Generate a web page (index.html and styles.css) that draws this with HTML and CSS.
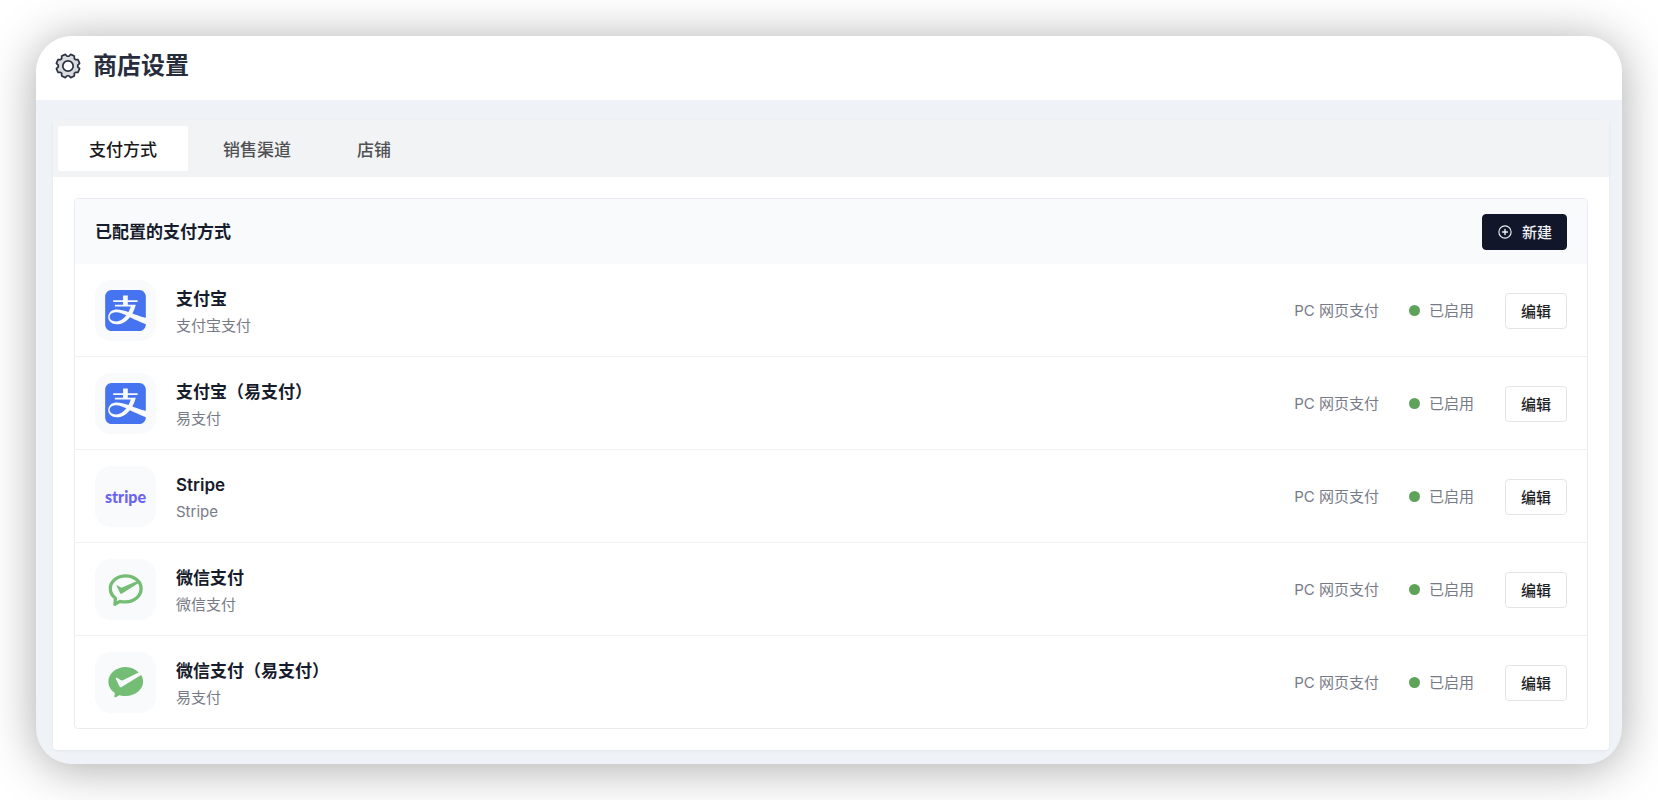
FILE: index.html
```html
<!DOCTYPE html>
<html lang="zh-CN">
<head>
  <meta charset="UTF-8" />
  <title>商店设置</title>
  <link rel="stylesheet" href="styles.css">
</head>
<body>
  <svg class="symbols" aria-hidden="true">
    <symbol id="alipay" viewBox="0 0 24 24">
      <path fill="#4674f0" d="M19.695 15.07c3.426 1.158 4.203 1.22 4.203 1.22V3.846c0-2.124-1.705-3.845-3.81-3.845H3.914C1.808.001.102 1.722.102 3.846v16.31c0 2.123 1.706 3.845 3.813 3.845h16.173c2.105 0 3.81-1.722 3.81-3.845v-.157s-6.19-2.602-9.315-4.119c-2.096 2.602-4.8 4.181-7.607 4.181-4.75 0-6.361-4.19-4.112-6.949.49-.602 1.324-1.175 2.617-1.497 2.025-.502 5.247.313 8.266 1.317a16.796 16.796 0 0 0 1.341-3.302H5.781v-.952h4.799V6.975H4.77v-.953h5.81V3.591s0-.409.411-.409h2.347v2.84h5.744v.951h-5.744v1.704h4.69a19.453 19.453 0 0 1-1.986 5.06c1.424.52 2.702 1.011 3.654 1.333m-13.81-2.032c-.596.06-1.71.325-2.321.869-1.83 1.608-.735 4.55 2.968 4.55 2.151 0 4.301-1.388 5.99-3.61-2.403-1.182-4.438-2.028-6.637-1.809" />
    </symbol>
  </svg>

  <div class="window">
    <header class="page-header">
      <svg class="gear" viewBox="0 0 24 24" fill="#d9dbdf" stroke="#2b3242" stroke-width="1.6" stroke-linejoin="round" aria-hidden="true">
        <path d="M12.8 3 14.5 1.3 17.8 2.7V5.1L18.9 6.2H21.3L22.7 9.5 21 11.2V12.8L22.7 14.5 21.3 17.8H18.9L17.8 18.9V21.3L14.5 22.7 12.8 21H11.2L9.5 22.7 6.2 21.3V18.9L5.1 17.8H2.7L1.3 14.5 3 12.8V11.2L1.3 9.5 2.7 6.2H5.1L6.2 5.1V2.7L9.5 1.3 11.2 3Z" />
        <circle cx="12" cy="12" r="4.8" fill="#fff" />
      </svg>
      <h1>商店设置</h1>
    </header>

    <main class="card">
      <div class="tabs" role="tablist">
        <button class="tab active" type="button" role="tab" aria-selected="true">支付方式</button>
        <button class="tab" type="button" role="tab" aria-selected="false">销售渠道</button>
        <button class="tab" type="button" role="tab" aria-selected="false">店铺</button>
      </div>

      <section class="panel">
        <div class="panel-header">
          <h2>已配置的支付方式</h2>
          <button class="btn btn-primary" type="button">
            <svg class="plus" viewBox="0 0 16 16" fill="none" stroke="currentColor" stroke-width="1.3" stroke-linecap="round" aria-hidden="true">
              <circle cx="8" cy="8" r="7" />
              <path d="M8 5.2v5.6M5.2 8h5.6" stroke-width="1.6" />
            </svg>
            新建
          </button>
        </div>

        <ul class="methods">
          <li class="method">
            <div class="logo"><svg aria-hidden="true"><use href="#alipay" /></svg></div>
            <div class="info">
              <h3>支付宝</h3>
              <p>支付宝支付</p>
            </div>
            <span class="platform">PC 网页支付</span>
            <span class="status">已启用</span>
            <button class="btn" type="button">编辑</button>
          </li>
          <li class="method">
            <div class="logo"><svg aria-hidden="true"><use href="#alipay" /></svg></div>
            <div class="info">
              <h3>支付宝（易支付）</h3>
              <p>易支付</p>
            </div>
            <span class="platform">PC 网页支付</span>
            <span class="status">已启用</span>
            <button class="btn" type="button">编辑</button>
          </li>
          <li class="method">
            <div class="logo"><span class="stripe">stripe</span></div>
            <div class="info">
              <h3>Stripe</h3>
              <p>Stripe</p>
            </div>
            <span class="platform">PC 网页支付</span>
            <span class="status">已启用</span>
            <button class="btn" type="button">编辑</button>
          </li>
          <li class="method">
            <div class="logo">
              <svg viewBox="0 0 41 41" aria-hidden="true">
                <path d="M20.7 6.8C12.2 6.8 5.3 12.4 5.3 19.6c0 4 2 7.300 5.100 9.700L9.900 35.300l4.900-3c1.800.4 3.600.6 5.900.6 8.500 0 15.400-5.900 15.400-13.100S29.200 6.800 20.700 6.800Z" fill="none" stroke="#74bd74" stroke-width="3.3" stroke-linejoin="round" />
                <path d="M11.300 16.300c1.700.1 3.400 1.400 5.200 2.500L34.500 11l.8 2L17 24.600c-.8.400-1.500.1-1.900-.7Z" fill="#74bd74" />
              </svg>
            </div>
            <div class="info">
              <h3>微信支付</h3>
              <p>微信支付</p>
            </div>
            <span class="platform">PC 网页支付</span>
            <span class="status">已启用</span>
            <button class="btn" type="button">编辑</button>
          </li>
          <li class="method">
            <div class="logo">
              <svg viewBox="0 0 41 41" aria-hidden="true">
                <path d="M16.200 25.300c-.6.300-1.200.100-1.500-.5L10.900 17c-.3-.9.600-1.500 1.500-1.100 1.300.7 2.600 1.900 3.900 2.400.6.200 1 .2 1.600-.1L33.600 10.600C30.500 7.100 25.900 5 20.700 5 11.100 5 3.400 11.600 3.400 19.700c0 4.400 2.300 8.300 6 10.900.3.300.5.600.4 1.100l-.5 2.500c-.1.900.6 1.400 1.400 1l3.200-1.700c.4-.2.900-.3 1.400-.1 1.700.5 3.500.7 5.400.7 9.600 0 17.400-6.500 17.400-14.500 0-2.400-.7-4.700-1.900-6.700Z" fill="#74bd74" />
              </svg>
            </div>
            <div class="info">
              <h3>微信支付（易支付）</h3>
              <p>易支付</p>
            </div>
            <span class="platform">PC 网页支付</span>
            <span class="status">已启用</span>
            <button class="btn" type="button">编辑</button>
          </li>
        </ul>
      </section>
    </main>
  </div>
</body>
</html>
```
FILE: styles.css
```css
* {
  box-sizing: border-box;
}

body {
  margin: 0;
  padding: 36px;
  background: #fff;
  color: #171c2c;
  font-family: Inter, "Noto Sans CJK SC", sans-serif;
}

h1,
h2,
h3,
p,
ul {
  margin: 0;
  padding: 0;
}

button {
  font-family: inherit;
  cursor: pointer;
}

.symbols {
  display: none;
}

.window {
  background: #eff3f8;
  border-radius: 36px;
  overflow: hidden;
  box-shadow: 0 4px 48px rgba(0, 0, 0, 0.34);
  padding-bottom: 14px;
}

.page-header {
  display: flex;
  align-items: center;
  gap: 12px;
  height: 64px;
  padding: 0 19px 5px;
  background: #fff;
}

.gear {
  width: 26px;
  height: 26px;
}

h1 {
  font-size: 24px;
  line-height: 32px;
  font-weight: 700;
  color: #272d3c;
}

.card {
  margin: 20px 13px 0 17px;
  background: #fff;
  border-radius: 4px;
  padding-bottom: 21px;
  box-shadow: 0 1px 3px rgba(0, 0, 0, 0.06);
}

.tabs {
  display: flex;
  gap: 4px;
  padding: 6px 5px;
  background: #f2f3f5;
  border-radius: 4px 4px 0 0;
}

.tab {
  height: 45px;
  padding: 0 31px;
  border: 0;
  border-radius: 2px;
  background: transparent;
  color: #505153;
  font-size: 17px;
  font-weight: 500;
}

.tab.active {
  background: #fff;
  color: #18191b;
}

.panel {
  margin: 21px 21px 0;
  border: 1px solid #e9ebee;
  border-radius: 4px;
  overflow: hidden;
}

.panel-header {
  display: flex;
  align-items: center;
  justify-content: space-between;
  height: 65px;
  padding: 0 20px;
  background: #f8fafc;
}

h2,
h3 {
  font-size: 17px;
  line-height: 26px;
  font-weight: 600;
}

.methods {
  list-style: none;
}

.method {
  display: flex;
  align-items: center;
  padding: 16px 20px 15px;
}

.method + .method {
  border-top: 1px solid #eff2f4;
}

.logo {
  display: flex;
  align-items: center;
  justify-content: center;
  width: 61px;
  height: 61px;
  margin-right: 20px;
  border-radius: 16px;
  background: #f9fafc;
}

.logo svg {
  width: 41px;
  height: 41px;
}

.stripe {
  font-family: Lato, sans-serif;
  font-size: 16px;
  font-weight: 900;
  color: #6a63f3;
}

.info {
  flex: 1;
  padding-top: 2px;
}

.info p {
  margin-top: 2px;
}

.info p,
.platform,
.status {
  font-size: 15px;
  line-height: 24px;
  color: #777b87;
}

.status {
  display: flex;
  align-items: center;
  gap: 9px;
  margin: 0 31px 0 30px;
}

.status::before {
  content: "";
  width: 11px;
  height: 11px;
  border-radius: 50%;
  background: #5fa35b;
}

.btn {
  height: 36px;
  padding: 0 15px;
  border: 1px solid #e4e4e6;
  border-radius: 4px;
  background: #fff;
  color: #202124;
  font-size: 15px;
  font-weight: 500;
}

.btn-primary {
  display: flex;
  align-items: center;
  gap: 10px;
  padding: 0 14px 0 15px;
  border-color: #11162b;
  background: #11162b;
  color: #f0f1f4;
}

.plus {
  width: 14px;
  height: 14px;
}
```
